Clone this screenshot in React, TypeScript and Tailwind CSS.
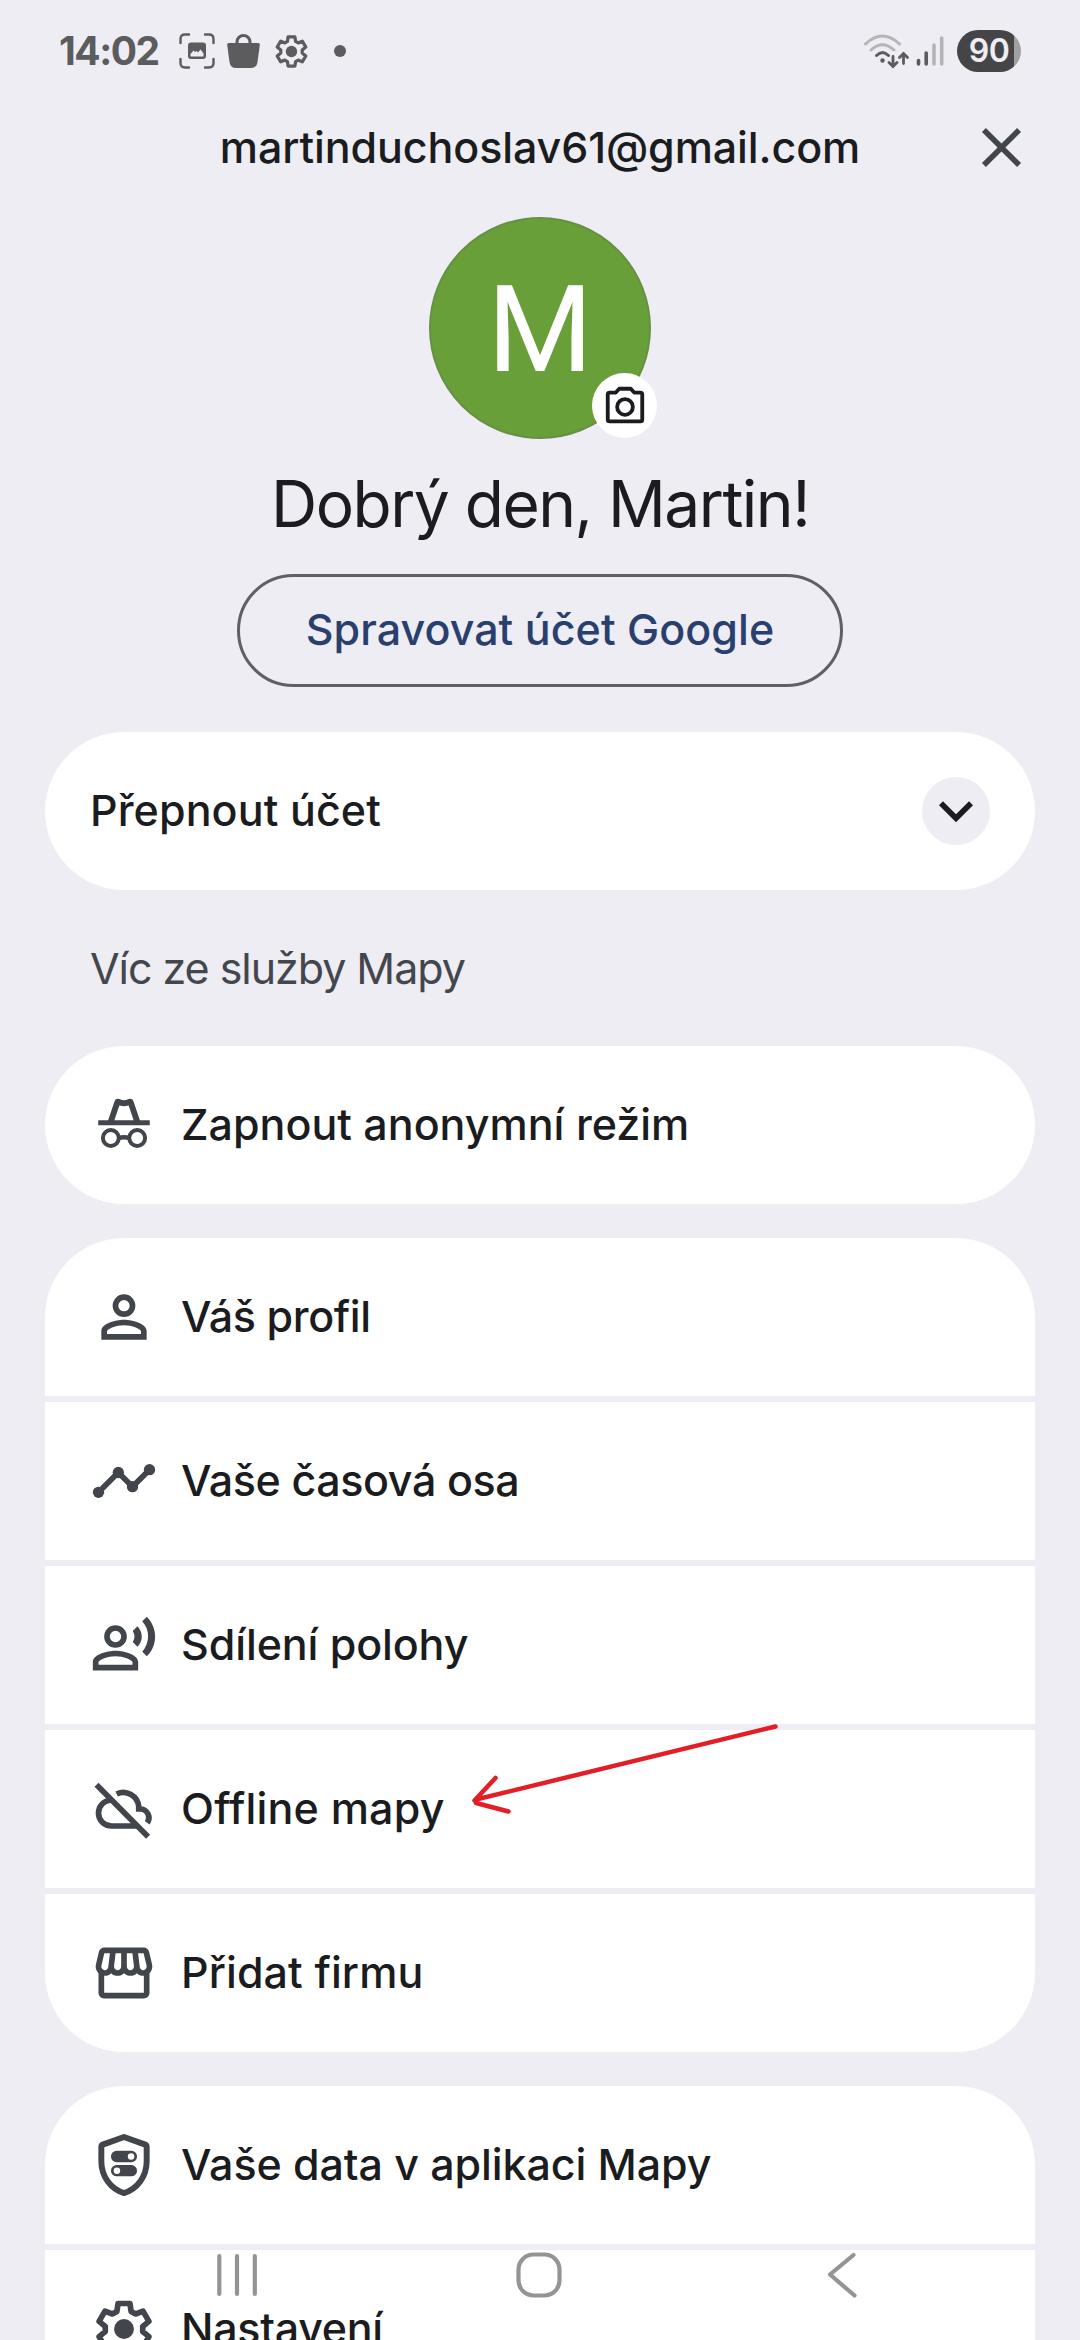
import React from 'react';
import { MdClose, MdExpandMore, MdOutlineStorefront } from 'react-icons/md';

const COG =
  'M9.5 5.8 9.9 3 14.1 3 14.5 5.8 16.1 6.7 18.7 5.7 20.8 9.3 18.6 11.1 18.6 12.9 20.8 14.7 18.7 18.3 16.1 17.3 14.5 18.2 14.1 21 9.9 21 9.5 18.2 7.9 17.3 5.3 18.3 3.2 14.7 5.4 12.9 5.4 11.1 3.2 9.3 5.3 5.7 7.9 6.7Z';

interface IconProps {
  className?: string;
}

function GearIcon({ className }: IconProps) {
  return (
    <svg viewBox="0 0 24 24" className={className}>
      <path d={COG} fill="none" stroke="currentColor" strokeWidth="2" strokeLinejoin="round" />
      <circle cx="12" cy="12" r="3.5" fill="currentColor" />
    </svg>
  );
}

function IncognitoIcon({ className }: IconProps) {
  return (
    <svg viewBox="0 0 24 24" className={className} fill="none" stroke="currentColor">
      <path d="M7.3 10.9 9.6 4.1Q9.7 3.75 10.1 3.85Q12 4.8 13.9 3.85Q14.3 3.75 14.4 4.1L16.7 10.9" strokeWidth="2.1" />
      <path d="M2.9 11.2H21.1" strokeWidth="1.7" />
      <circle cx="7.35" cy="16.6" r="2.8" strokeWidth="1.4" />
      <circle cx="16.65" cy="16.6" r="2.8" strokeWidth="1.4" />
      <path d="M10 16.6Q12 16 14 16.6" strokeWidth="1.6" />
    </svg>
  );
}

function PersonIcon({ className }: IconProps) {
  return (
    <svg viewBox="0 0 24 24" className={className} fill="currentColor">
      <circle cx="12" cy="8" r="3" fill="none" stroke="currentColor" strokeWidth="2" />
      <path
        fillRule="evenodd"
        d="M12 13c-3.2 0-8 1.4-8 4v3h16v-3c0-2.6-4.8-4-8-4zm6 5H6v-1c.2-.8 3.2-2.05 6-2.05s5.8 1.25 6 2.05z"
      />
    </svg>
  );
}

function TimelineIcon({ className }: IconProps) {
  return (
    <svg viewBox="0 0 24 24" className={className} fill="currentColor">
      <path d="M3 16 10 9 15 14 21 8" fill="none" stroke="currentColor" strokeWidth="2" />
      <circle cx="3" cy="16" r="2" />
      <circle cx="10" cy="9" r="2" />
      <circle cx="15" cy="14" r="2" />
      <circle cx="21" cy="8" r="2" />
    </svg>
  );
}

function ShareLocationIcon({ className }: IconProps) {
  return (
    <svg viewBox="0 0 24 24" className={className} fill="currentColor">
      <circle cx="9" cy="9" r="3" fill="none" stroke="currentColor" strokeWidth="2" />
      <path
        fillRule="evenodd"
        d="M9 14c-3.2 0-8 1.4-8 4v3h16v-3c0-2.6-4.8-4-8-4zm6 5H3v-1c.2-.8 3.2-2.05 6-2.05s5.8 1.25 6 2.05z"
      />
      <path d="M16.76 5.36l-1.68 1.69c.84 1.18.84 2.71 0 3.89l1.68 1.69c2.02-2.02 2.02-5.07 0-7.27zM20.07 2l-1.63 1.63c2.77 3.02 2.77 7.56 0 10.74L20.07 16c3.9-3.89 3.91-9.95 0-14z" />
    </svg>
  );
}

function CloudOffIcon({ className }: IconProps) {
  return (
    <svg viewBox="0 0 24 24" className={className} fill="none" stroke="currentColor" strokeWidth="2">
      <path d="M2.3 3.4 20.5 21.8" />
      <path d="M7.3 8.9C4.9 9 3 11 3 13.4 3 16 5 18 7.6 18H16.8" />
      <path d="M9.4 6.7A5.5 5.5 0 0 1 17.2 11.1V12H17.9A3.1 3.1 0 0 1 20.2 16.9" />
    </svg>
  );
}

function PrivacyShieldIcon({ className }: IconProps) {
  return (
    <svg viewBox="0 0 24 24" className={className} fill="currentColor">
      <path
        d="M12 2.1 4.5 4.8Q4 5 4 5.6V10.8C4 16.1 7.4 20.6 12 21.9 16.6 20.6 20 16.1 20 10.8V5.6Q20 5 19.5 4.8Z"
        fill="none"
        stroke="currentColor"
        strokeWidth="2.1"
        strokeLinejoin="round"
      />
      <rect x="7.4" y="7" width="9.2" height="4" rx="2" />
      <rect x="7.4" y="12" width="9.2" height="4" rx="2" />
      <circle cx="14.5" cy="9" r="1.15" fill="#fff" />
      <circle cx="9.5" cy="14" r="1.15" fill="#fff" />
    </svg>
  );
}

function StatusBar() {
  return (
    <div className="h-[102px] flex items-center justify-between pl-[59px] pr-[59px] text-[#5c5c5e]">
      <div className="flex items-center">
        <span className="w-[120px] text-[39px] font-bold tracking-[-1.5px] whitespace-nowrap">14:02</span>
        <svg viewBox="0 0 36 36" className="w-9 h-9" fill="none" stroke="currentColor">
          <path
            d="M1.5 10V6Q1.5 1.5 6 1.5H10M26 1.5H30Q34.5 1.5 34.5 6V10M34.5 26V30Q34.5 34.5 30 34.5H26M10 34.5H6Q1.5 34.5 1.5 30V26"
            strokeWidth="2.4"
            strokeLinecap="round"
          />
          <rect x="9" y="9.5" width="18" height="16.5" rx="3" fill="currentColor" stroke="none" />
          <path d="M11.5 23.5V21L14.5 17.5 16 19 17.5 18 19 19.5 21.5 16.5 24.5 20.5V23.5Z" fill="#ededf3" stroke="none" />
        </svg>
        <svg viewBox="0 0 34 36" className="w-[34px] h-9 ml-3" fill="currentColor">
          <path d="M10 11V9A6.5 6.5 0 0 1 23 9V11" fill="none" stroke="currentColor" strokeWidth="3" />
          <path d="M1.8 10H31.2Q33 10 32.8 12L30.5 29Q29.6 35 24 35H9Q3.4 35 2.5 29L.2 12Q0 10 1.8 10Z" />
        </svg>
        <GearIcon className="w-[39px] h-[39px] ml-[11px]" />
        <span className="w-3 h-3 rounded-full bg-[#5c5c5e] ml-[23px]" />
      </div>
      <div className="flex items-center">
        <svg viewBox="0 0 46 36" className="w-[46px] h-9" fill="none" stroke="currentColor" strokeLinecap="round">
          <path d="M2.5 11Q19.5 -5 36.5 11" strokeWidth="3" stroke="#b4b4b9" />
          <path d="M8 17Q19.5 6.5 31 17" strokeWidth="3" stroke="#b4b4b9" />
          <path d="M13.5 22.5Q19.5 16.5 25.5 22.5" strokeWidth="3" />
          <circle cx="19.5" cy="27.5" r="2.2" fill="currentColor" stroke="none" />
          <path d="M30 23.5V33M26 29.5 30 33.5 34 29.5M40.5 30.5V21M36.5 24.5 40.5 20.5 44.5 24.5" strokeWidth="2.8" />
        </svg>
        <svg viewBox="0 0 28 32" className="w-7 h-8 ml-[7px]" strokeWidth="3.6" strokeLinecap="round">
          <path d="M2.5 25.5V29M10.2 18V29" stroke="#5c5c5e" />
          <path d="M18 10V29M25.7 3V29" stroke="#b4b4b9" />
        </svg>
        <div className="w-16 h-[42px] ml-[13px] rounded-full overflow-hidden bg-[linear-gradient(to_right,#454547_57px,#a1a1a4_57px)] flex items-center justify-center">
          <span className="text-[32px] leading-none font-semibold tracking-[-0.5px] text-[#ededf3]">90</span>
        </div>
      </div>
    </div>
  );
}

interface MenuRowProps {
  label: string;
  icon: React.ComponentType<IconProps>;
  spacing: string;
}

function MenuRow({ label, icon: Icon, spacing }: MenuRowProps) {
  return (
    <div className="h-[158px] shrink-0 bg-white flex items-center pl-[45px]">
      <Icon className="w-[68px] h-[68px] shrink-0 text-[#42454c]" />
      <span className={`ml-[23px] pb-0.5 text-[43px] font-medium whitespace-nowrap ${spacing}`}>{label}</span>
    </div>
  );
}

const mainItems: MenuRowProps[] = [
  { label: 'Váš profil', icon: PersonIcon, spacing: 'tracking-[-0.4px]' },
  { label: 'Vaše časová osa', icon: TimelineIcon, spacing: 'tracking-[-0.4px]' },
  { label: 'Sdílení polohy', icon: ShareLocationIcon, spacing: 'tracking-[-0.1px]' },
  { label: 'Offline mapy', icon: CloudOffIcon, spacing: 'tracking-[0.2px]' },
  { label: 'Přidat firmu', icon: MdOutlineStorefront, spacing: 'tracking-[0.1px]' },
];

const dataItems: MenuRowProps[] = [
  { label: 'Vaše data v aplikaci Mapy', icon: PrivacyShieldIcon, spacing: 'tracking-[-0.1px]' },
  { label: 'Nastavení', icon: GearIcon, spacing: 'tracking-[-0.3px]' },
];

function NavigationBar() {
  return (
    <div className="absolute inset-x-0 bottom-0 h-[90px]">
      <svg viewBox="0 0 1080 90" className="w-full h-full" fill="none" stroke="#949494" strokeWidth="4.2" strokeLinecap="round" strokeLinejoin="round">
        <path d="M219.3 6V44M237 6V44M254.8 6V44" />
        <rect x="518.5" y="4.5" width="41" height="41" rx="15" />
        <path d="M853.5 5 830 24.5 854.5 45.5" />
      </svg>
    </div>
  );
}

export default function App() {
  return (
    <div className="relative w-[1080px] h-[2340px] overflow-hidden bg-[#ededf3] text-[#1b1c20] font-['Inter','Noto_Sans',sans-serif]">
      <StatusBar />

      {/* Account header */}
      <header className="relative h-[91px] flex items-center justify-center">
        <span className="text-[43px] font-medium whitespace-nowrap tracking-[-0.1px]">martinduchoslav61@gmail.com</span>
        <MdClose className="absolute right-[45px] top-[12px] w-[67px] h-[67px] text-[#42454c]" />
      </header>

      <div className="flex flex-col items-center">
        <div className="relative mt-6 w-[222px] h-[222px] rounded-full bg-[#689f38] border-2 border-[#688f45] flex items-center justify-center">
          <span className="pt-[4px] text-[121px] leading-none text-white font-['Roboto',sans-serif]">M</span>
          <div className="absolute left-[161px] top-[154px] w-[65px] h-[65px] rounded-full bg-white flex items-center justify-center">
            <svg viewBox="0 0 24 24" className="w-[46px] h-[46px]" fill="none" stroke="#1b1c20" strokeWidth="2" strokeLinejoin="round">
              <path d="M4 5H7.2L9 3H15L16.8 5H20Q21 5 21 6V19Q21 20 20 20H4Q3 20 3 19V6Q3 5 4 5Z" />
              <circle cx="12" cy="12.5" r="4.1" />
            </svg>
          </div>
        </div>
        <h1 className="mt-[25px] h-20 leading-[80px] text-[64px] whitespace-nowrap tracking-[-1.5px]">Dobrý den, Martin!</h1>
        <button className="mt-[30px] w-[606px] h-[113px] pb-0.5 rounded-full border-[3px] border-[#5e6066] text-[43px] font-medium text-[#29406f] whitespace-nowrap tracking-[0.05px]">
          Spravovat účet Google
        </button>
      </div>

      <main className="mt-[45px] px-[45px]">
        <div className="h-[158px] rounded-full bg-white flex items-center justify-between pl-[45px] pr-[45px]">
          <span className="pb-0.5 text-[43px] font-medium whitespace-nowrap tracking-[0.1px]">Přepnout účet</span>
          <div className="w-[68px] h-[68px] rounded-full bg-[#ededf3]">
            <MdExpandMore className="w-[68px] h-[68px]" />
          </div>
        </div>

        <h2 className="h-[156px] leading-[156px] pl-[45px] text-[43px] text-[#44464d] whitespace-nowrap tracking-[-1.05px]">
          Víc ze služby Mapy
        </h2>

        <div className="rounded-[79px] overflow-hidden">
          <MenuRow label="Zapnout anonymní režim" icon={IncognitoIcon} spacing="tracking-normal" />
        </div>

        <div className="relative mt-[34px]">
          <div className="rounded-[79px] overflow-hidden flex flex-col gap-1.5">
            {mainItems.map((item) => (
              <MenuRow key={item.label} {...item} />
            ))}
          </div>
          {/* Hand-drawn pointer to the offline maps row */}
          <svg viewBox="0 0 310 96" className="absolute left-[425px] top-[482px] w-[310px] h-24" fill="none" stroke="#e41e26" strokeWidth="4.5" strokeLinecap="round" strokeLinejoin="round">
            <path d="M305.5 6.5 6 79.5M25.5 58 4.5 80.5M6 83 38.5 91.5" />
          </svg>
        </div>

        <div className="mt-[34px] rounded-t-[79px] overflow-hidden flex flex-col gap-1.5">
          {dataItems.map((item) => (
            <MenuRow key={item.label} {...item} />
          ))}
        </div>
      </main>

      <NavigationBar />
    </div>
  );
}
